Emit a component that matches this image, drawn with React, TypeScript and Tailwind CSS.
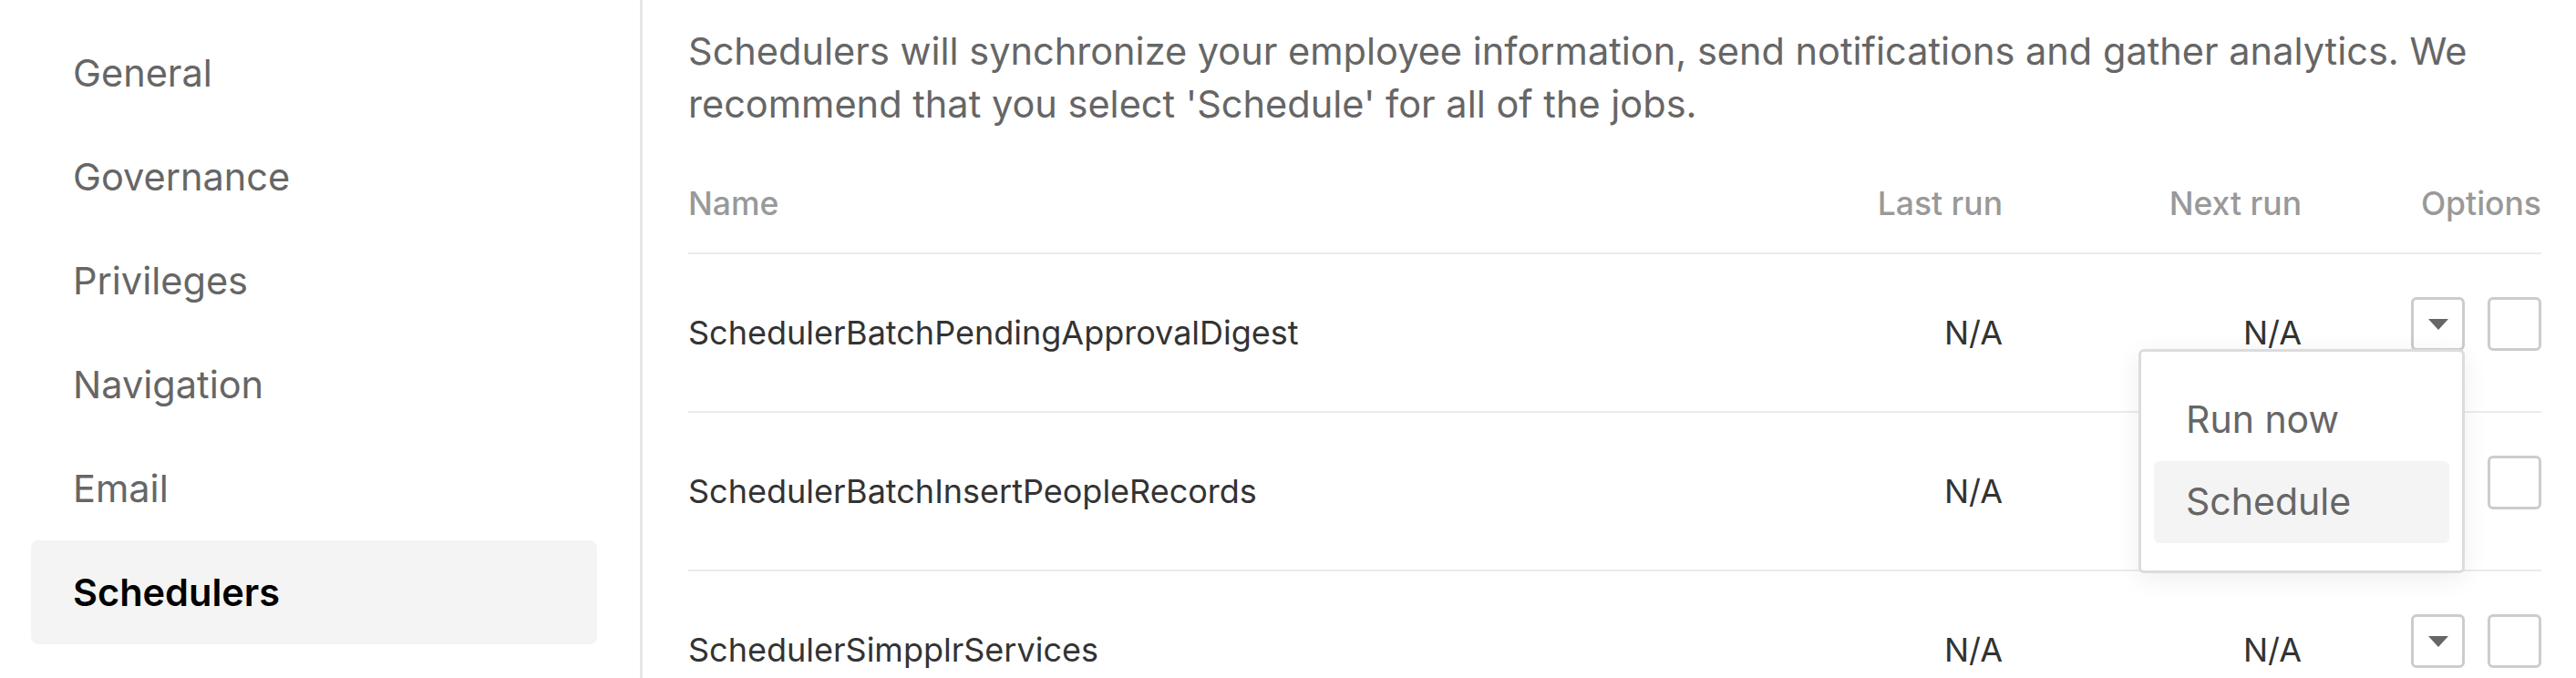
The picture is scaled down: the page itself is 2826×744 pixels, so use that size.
const navItems = ['General', 'Governance', 'Privileges', 'Navigation', 'Email', 'Schedulers'];

const jobs = [
  { name: 'SchedulerBatchPendingApprovalDigest', lastRun: 'N/A', nextRun: 'N/A', open: true },
  { name: 'SchedulerBatchInsertPeopleRecords', lastRun: 'N/A', nextRun: 'N/A', open: false },
  { name: 'SchedulerSimpplrServices', lastRun: 'N/A', nextRun: 'N/A', open: false },
];

function Caret() {
  return (
    <svg width="22" height="12" viewBox="0 0 22 12">
      <polygon points="0,0 22,0 11,12" fill="#666" />
    </svg>
  );
}

function OptionsMenu() {
  return (
    <div className="absolute top-[57px] right-0 z-10 w-[358px] rounded-[6px] border-[3px] border-[#dcdcdc] bg-white px-[14px] py-[30px] shadow-[0_6px_28px_rgba(0,0,0,0.07)]">
      <div className="flex h-[90px] items-center rounded-[6px] px-[35px] text-[41px] text-[#666]">Run now</div>
      <div className="flex h-[90px] items-center rounded-[6px] bg-[#f4f4f4] px-[35px] text-[41px] text-[#666]">
        Schedule
      </div>
    </div>
  );
}

export default function App() {
  return (
    <div className="flex h-[744px] overflow-hidden bg-white font-['Inter',sans-serif]">
      <aside className="w-[705px] shrink-0 border-r-[3px] border-[#e6e6e6] pt-[23px] pl-[34px] pr-[47px]">
        <nav className="flex flex-col">
          {navItems.map((item) => (
            <a
              key={item}
              className={
                item === 'Schedulers'
                  ? 'flex h-[114px] items-center rounded-[8px] bg-[#f4f4f4] px-[46px] text-[41.5px] font-semibold text-black'
                  : 'flex h-[114px] items-center px-[46px] text-[41.5px] text-[#666]'
              }
            >
              {item}
            </a>
          ))}
        </nav>
      </aside>

      <main className="flex-1 pt-[27px] pl-[50px] pr-[38px]">
        <p className="text-[41.5px] leading-[58px] text-[#666]">
          Schedulers will synchronize your employee information, send notifications and gather analytics. We
          recommend that you select 'Schedule' for all of the jobs.
        </p>

        <div className="grid grid-cols-[1fr_328px_328px_263px] border-b-2 border-[#ebebeb] pt-[60px] pb-[32px] text-[35.5px] leading-[42px] font-medium text-[#999]">
          <div>Name</div>
          <div className="text-right">Last run</div>
          <div className="text-right">Next run</div>
          <div className="text-right">Options</div>
        </div>

        {jobs.map((job) => (
          <div
            key={job.name}
            className="grid h-[174px] grid-cols-[1fr_328px_328px_263px] items-center border-b-2 border-[#ebebeb] text-[36px] text-[#333]"
          >
            <div>{job.name}</div>
            <div className="text-right">{job.lastRun}</div>
            <div className="text-right">{job.nextRun}</div>
            <div className="flex justify-end gap-[25px] pb-[20px]">
              <div className="relative">
                <button className="flex h-[59px] w-[59px] items-start justify-center rounded-[6px] border-[3px] border-[#cccccc] bg-white pt-[21px]">
                  <Caret />
                </button>
                {job.open && <OptionsMenu />}
              </div>
              <div className="h-[59px] w-[59px] rounded-[6px] border-[3px] border-[#cccccc] bg-white" />
            </div>
          </div>
        ))}
      </main>
    </div>
  );
}
